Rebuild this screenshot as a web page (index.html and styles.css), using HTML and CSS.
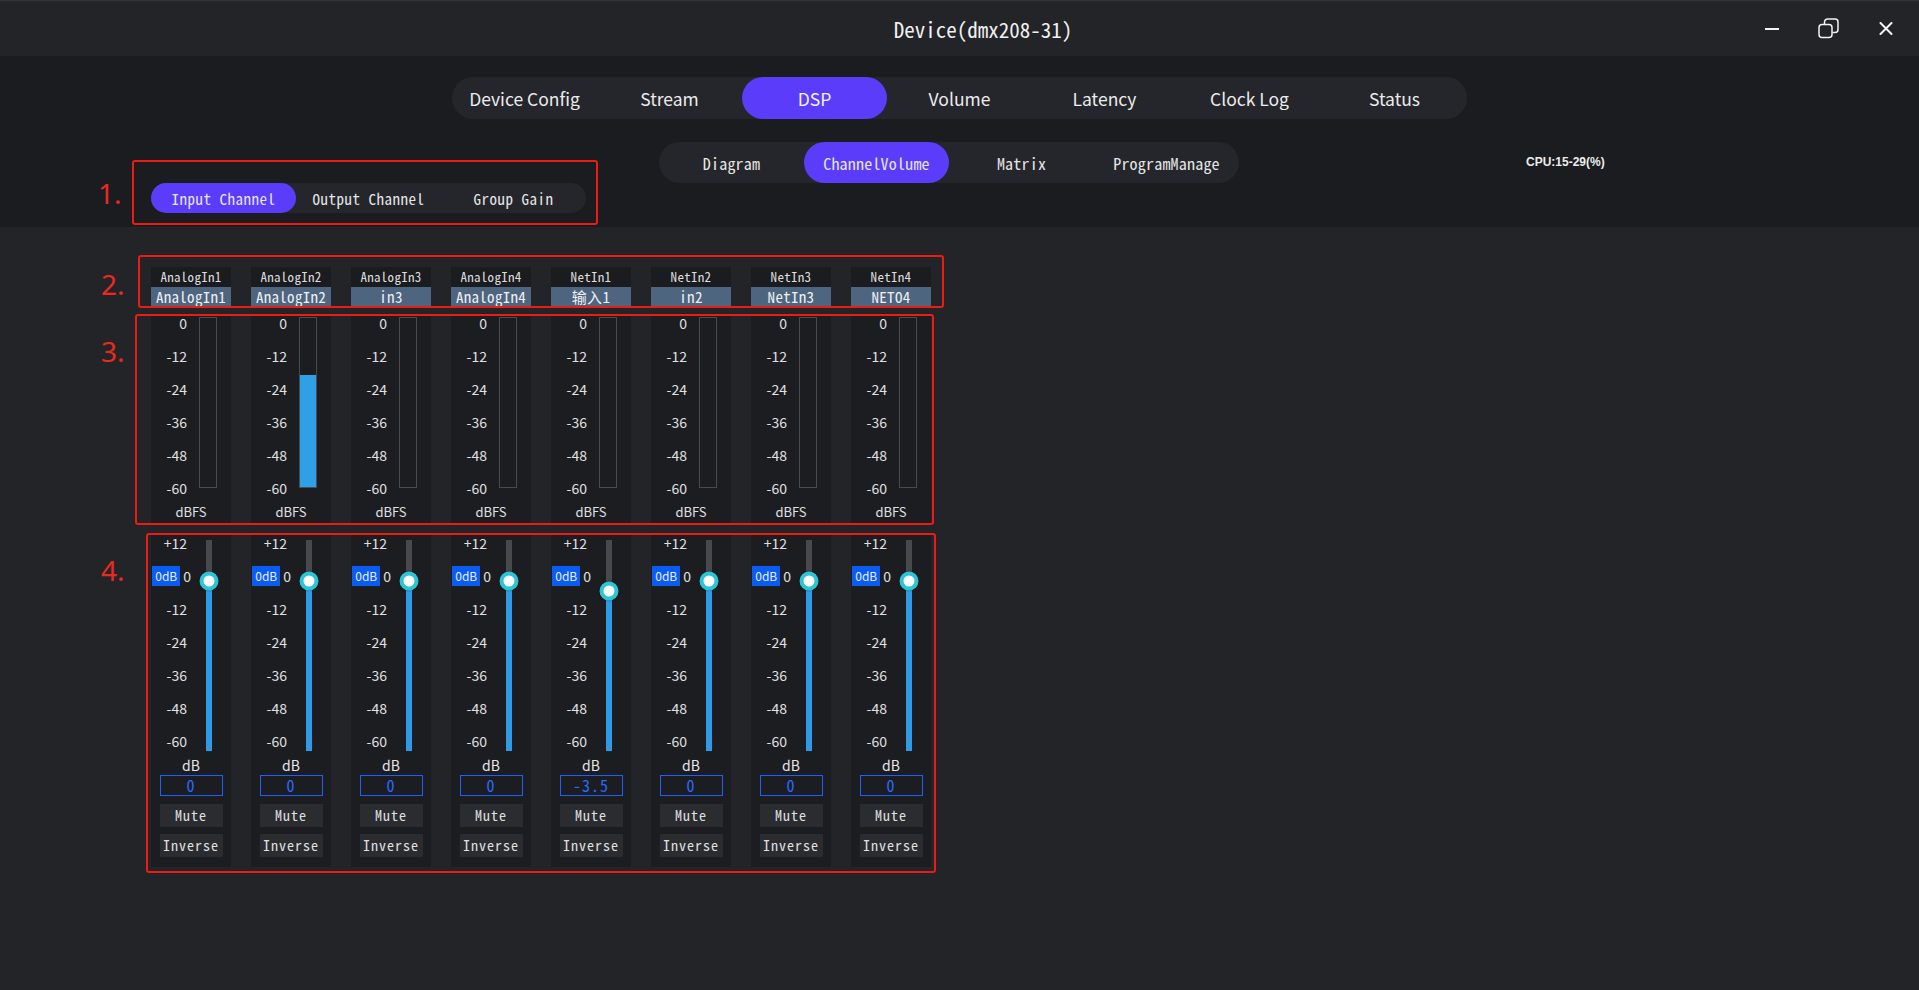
FILE: index.html
```html
<!DOCTYPE html>
<html lang="en">
<head>
<meta charset="utf-8">
<title>Device(dmx208-31)</title>
<link rel="stylesheet" href="styles.css">
</head>
<body>
<div class="titlebar">
  <div class="title">Device(dmx208-31)</div>
  <div class="winctl">
    <div class="winbtn"><svg width="14" height="2" viewBox="0 0 14 2"><rect width="14" height="2" fill="#f2f2f2"/></svg></div>
    <div class="winbtn"><svg width="21" height="21" viewBox="0 0 21 21" fill="none" stroke="#f2f2f2" stroke-width="1.5"><rect x="1" y="6.5" width="13" height="13" rx="3"/><path d="M6.5 6V4A3 3 0 0 1 9.5 1H17A3 3 0 0 1 20 4V11.5A3 3 0 0 1 17 14.5H14.5"/></svg></div>
    <div class="winbtn"><svg width="14" height="13" viewBox="0 0 14 13" stroke="#f2f2f2" stroke-width="2" stroke-linecap="round"><path d="M1.5 1L12.5 12M12.5 1L1.5 12"/></svg></div>
  </div>
</div>

<div class="header">
  <div class="maintabs">
    <div class="maintab">Device Config</div>
    <div class="maintab">Stream</div>
    <div class="maintab active">DSP</div>
    <div class="maintab">Volume</div>
    <div class="maintab">Latency</div>
    <div class="maintab">Clock Log</div>
    <div class="maintab">Status</div>
  </div>
  <div class="subrow">
    <div class="anno anno1">1.</div>
    <div class="box box1">
      <div class="pills">
        <div class="pill active">Input Channel</div>
        <div class="pill">Output Channel</div>
        <div class="pill">Group Gain</div>
      </div>
    </div>
    <div class="subtabs">
      <div class="subtab">Diagram</div>
      <div class="subtab active">ChannelVolume</div>
      <div class="subtab">Matrix</div>
      <div class="subtab">ProgramManage</div>
    </div>
    <div class="cpu">CPU:15-29(%)</div>
  </div>
</div>

<div class="content">
  <div class="row">
    <div class="anno anno2">2.</div>
    <div class="box box2">
      <div class="cols">
        <div class="hcol"><div class="hlabel">AnalogIn1</div><div class="hname">AnalogIn1</div></div>
        <div class="hcol"><div class="hlabel">AnalogIn2</div><div class="hname">AnalogIn2</div></div>
        <div class="hcol"><div class="hlabel">AnalogIn3</div><div class="hname">in3</div></div>
        <div class="hcol"><div class="hlabel">AnalogIn4</div><div class="hname">AnalogIn4</div></div>
        <div class="hcol"><div class="hlabel">NetIn1</div><div class="hname">输入1</div></div>
        <div class="hcol"><div class="hlabel">NetIn2</div><div class="hname">in2</div></div>
        <div class="hcol"><div class="hlabel">NetIn3</div><div class="hname">NetIn3</div></div>
        <div class="hcol"><div class="hlabel">NetIn4</div><div class="hname">NETO4</div></div>
      </div>
    </div>
  </div>

  <div class="row row3">
    <div class="anno anno3">3.</div>
    <div class="box box3">
      <div class="cols">
        <div class="mcol"><div class="mtop"><div class="mscale"><span>0</span><span>-12</span><span>-24</span><span>-36</span><span>-48</span><span>-60</span></div><div class="meter"><div class="mfill" style="height:0px"></div></div></div><div class="munit">dBFS</div></div>
        <div class="mcol"><div class="mtop"><div class="mscale"><span>0</span><span>-12</span><span>-24</span><span>-36</span><span>-48</span><span>-60</span></div><div class="meter"><div class="mfill" style="height:112px"></div></div></div><div class="munit">dBFS</div></div>
        <div class="mcol"><div class="mtop"><div class="mscale"><span>0</span><span>-12</span><span>-24</span><span>-36</span><span>-48</span><span>-60</span></div><div class="meter"><div class="mfill" style="height:0px"></div></div></div><div class="munit">dBFS</div></div>
        <div class="mcol"><div class="mtop"><div class="mscale"><span>0</span><span>-12</span><span>-24</span><span>-36</span><span>-48</span><span>-60</span></div><div class="meter"><div class="mfill" style="height:0px"></div></div></div><div class="munit">dBFS</div></div>
        <div class="mcol"><div class="mtop"><div class="mscale"><span>0</span><span>-12</span><span>-24</span><span>-36</span><span>-48</span><span>-60</span></div><div class="meter"><div class="mfill" style="height:0px"></div></div></div><div class="munit">dBFS</div></div>
        <div class="mcol"><div class="mtop"><div class="mscale"><span>0</span><span>-12</span><span>-24</span><span>-36</span><span>-48</span><span>-60</span></div><div class="meter"><div class="mfill" style="height:0px"></div></div></div><div class="munit">dBFS</div></div>
        <div class="mcol"><div class="mtop"><div class="mscale"><span>0</span><span>-12</span><span>-24</span><span>-36</span><span>-48</span><span>-60</span></div><div class="meter"><div class="mfill" style="height:0px"></div></div></div><div class="munit">dBFS</div></div>
        <div class="mcol"><div class="mtop"><div class="mscale"><span>0</span><span>-12</span><span>-24</span><span>-36</span><span>-48</span><span>-60</span></div><div class="meter"><div class="mfill" style="height:0px"></div></div></div><div class="munit">dBFS</div></div>
      </div>
    </div>
  </div>

  <div class="row row4">
    <div class="anno anno4">4.</div>
    <div class="box box4">
      <div class="cols">
        <div class="fcol"><div class="ftop"><div class="fscale"><span>+12</span><span class="zero"><b class="odb">0dB</b>0</span><span>-12</span><span>-24</span><span>-36</span><span>-48</span><span>-60</span></div><div class="track"><div class="track-off" style="height:41px"></div><div class="track-on"></div><div class="knob" style="top:41px"></div></div></div><div class="fdb">dB</div><div class="fval">0</div><div class="fbtn">Mute</div><div class="fbtn">Inverse</div></div>
        <div class="fcol"><div class="ftop"><div class="fscale"><span>+12</span><span class="zero"><b class="odb">0dB</b>0</span><span>-12</span><span>-24</span><span>-36</span><span>-48</span><span>-60</span></div><div class="track"><div class="track-off" style="height:41px"></div><div class="track-on"></div><div class="knob" style="top:41px"></div></div></div><div class="fdb">dB</div><div class="fval">0</div><div class="fbtn">Mute</div><div class="fbtn">Inverse</div></div>
        <div class="fcol"><div class="ftop"><div class="fscale"><span>+12</span><span class="zero"><b class="odb">0dB</b>0</span><span>-12</span><span>-24</span><span>-36</span><span>-48</span><span>-60</span></div><div class="track"><div class="track-off" style="height:41px"></div><div class="track-on"></div><div class="knob" style="top:41px"></div></div></div><div class="fdb">dB</div><div class="fval">0</div><div class="fbtn">Mute</div><div class="fbtn">Inverse</div></div>
        <div class="fcol"><div class="ftop"><div class="fscale"><span>+12</span><span class="zero"><b class="odb">0dB</b>0</span><span>-12</span><span>-24</span><span>-36</span><span>-48</span><span>-60</span></div><div class="track"><div class="track-off" style="height:41px"></div><div class="track-on"></div><div class="knob" style="top:41px"></div></div></div><div class="fdb">dB</div><div class="fval">0</div><div class="fbtn">Mute</div><div class="fbtn">Inverse</div></div>
        <div class="fcol"><div class="ftop"><div class="fscale"><span>+12</span><span class="zero"><b class="odb">0dB</b>0</span><span>-12</span><span>-24</span><span>-36</span><span>-48</span><span>-60</span></div><div class="track"><div class="track-off" style="height:51px"></div><div class="track-on"></div><div class="knob" style="top:51px"></div></div></div><div class="fdb">dB</div><div class="fval">-3.5</div><div class="fbtn">Mute</div><div class="fbtn">Inverse</div></div>
        <div class="fcol"><div class="ftop"><div class="fscale"><span>+12</span><span class="zero"><b class="odb">0dB</b>0</span><span>-12</span><span>-24</span><span>-36</span><span>-48</span><span>-60</span></div><div class="track"><div class="track-off" style="height:41px"></div><div class="track-on"></div><div class="knob" style="top:41px"></div></div></div><div class="fdb">dB</div><div class="fval">0</div><div class="fbtn">Mute</div><div class="fbtn">Inverse</div></div>
        <div class="fcol"><div class="ftop"><div class="fscale"><span>+12</span><span class="zero"><b class="odb">0dB</b>0</span><span>-12</span><span>-24</span><span>-36</span><span>-48</span><span>-60</span></div><div class="track"><div class="track-off" style="height:41px"></div><div class="track-on"></div><div class="knob" style="top:41px"></div></div></div><div class="fdb">dB</div><div class="fval">0</div><div class="fbtn">Mute</div><div class="fbtn">Inverse</div></div>
        <div class="fcol"><div class="ftop"><div class="fscale"><span>+12</span><span class="zero"><b class="odb">0dB</b>0</span><span>-12</span><span>-24</span><span>-36</span><span>-48</span><span>-60</span></div><div class="track"><div class="track-off" style="height:41px"></div><div class="track-on"></div><div class="knob" style="top:41px"></div></div></div><div class="fdb">dB</div><div class="fval">0</div><div class="fbtn">Mute</div><div class="fbtn">Inverse</div></div>
      </div>
    </div>
  </div>
</div>
</body>
</html>
```

FILE: styles.css
```css
html, body {
  margin: 0;
  padding: 0;
}
body {
  width: 1919px;
  height: 990px;
  overflow: hidden;
  background: #1b1c1f;
  color: #e6e6e6;
  font-family: "Noto Sans CJK SC", "Noto Sans", sans-serif;
}

/* title bar */
.titlebar {
  height: 56px;
  box-sizing: border-box;
  border-top: 1px solid #34353a;
  background: #232428;
  display: flex;
  align-items: center;
}
.title {
  flex: 1;
  text-align: center;
  padding-left: 223px;
  font-family: "Noto Sans Mono CJK SC", "Noto Sans CJK SC", "DejaVu Sans Mono", monospace;
  font-size: 21px;
  color: #f0f0f0;
}
.winctl {
  display: flex;
  padding-right: 5px;
}
.winbtn {
  width: 57px;
  height: 55px;
  display: flex;
  align-items: center;
  justify-content: center;
}

/* header */
.header {
  height: 171px;
  box-sizing: border-box;
  padding-top: 21px;
  background: #1b1c1f;
}
.maintabs {
  display: flex;
  width: 1015px;
  height: 42px;
  margin: 0 auto;
  background: #25262b;
  border-radius: 21px;
}
.maintab {
  width: 145px;
  display: flex;
  align-items: center;
  justify-content: center;
  border-radius: 21px;
  font-size: 17.5px;
  color: #ececec;
}
.active {
  background: #5b3cfb;
  color: #f4f2ff;
}
.subrow {
  display: flex;
  align-items: flex-start;
  padding-left: 98px;
  margin-top: 23px;
}
.anno {
  width: 34px;
  box-sizing: border-box;
  font-family: "Noto Sans", "Liberation Sans", sans-serif;
  font-size: 28px;
  line-height: 34px;
  color: #ea2a1f;
}
.anno1 { margin-top: 34px; }
.anno2 { margin-top: 12px; padding-left: 3px; }
.anno3 { margin-top: 20px; padding-left: 3px; }
.anno4 { margin-top: 20px; padding-left: 3px; }
.box {
  border: 2px solid #ec1c14;
  border-radius: 3px;
}
.box1 {
  margin-top: 18px;
  padding: 21px 10px 10px 17px;
}
.pills {
  display: flex;
  height: 30px;
  background: #25262b;
  border-radius: 15px;
}
.pill {
  width: 145px;
  display: flex;
  align-items: center;
  justify-content: center;
  border-radius: 15px;
  font-family: "Noto Sans Mono CJK SC", "Noto Sans CJK SC", "DejaVu Sans Mono", monospace;
  font-size: 15px;
  letter-spacing: 0.5px;
  color: #e6e6e6;
}
.subtabs {
  margin-left: 61px;
  display: flex;
  height: 41px;
  background: #25262b;
  border-radius: 21px;
}
.subtab {
  width: 145px;
  display: flex;
  align-items: center;
  justify-content: center;
  border-radius: 21px;
  font-family: "Noto Sans Mono CJK SC", "Noto Sans CJK SC", "DejaVu Sans Mono", monospace;
  font-size: 16px;
  letter-spacing: 0.2px;
  color: #e6e6e6;
}
.cpu {
  margin-left: 287px;
  margin-top: 13px;
  font-family: "Liberation Sans", Arial, sans-serif;
  font-weight: bold;
  font-size: 12px;
  color: #ececec;
}

/* content */
.content {
  height: 763px;
  box-sizing: border-box;
  padding-top: 28px;
  background: #232428;
}
.row {
  display: flex;
  align-items: flex-start;
  padding-left: 98px;
}
.row3 { margin-top: 6px; }
.row4 { margin-top: 8px; }
.cols {
  display: flex;
  gap: 20px;
}
.box2 {
  margin-left: 6px;
  padding: 10px 11px 0 11px;
}
.box3 {
  margin-left: 3px;
  padding: 0 1px 0 14px;
}
.box4 {
  margin-left: 14px;
  padding: 0 3px 4px 3px;
}

/* header columns */
.hcol {
  width: 80px;
  text-align: center;
  font-family: "Noto Sans Mono CJK SC", "Noto Sans CJK SC", "DejaVu Sans Mono", monospace;
}
.hlabel {
  height: 20px;
  line-height: 20px;
  background: #1b1c1f;
  font-size: 13px;
  letter-spacing: 0.3px;
  color: #dedede;
}
.hname {
  height: 19px;
  line-height: 19px;
  background: #4e6580;
  font-size: 15px;
  letter-spacing: 0.3px;
  color: #eef0f3;
  white-space: nowrap;
  overflow: hidden;
}

/* meters */
.mcol {
  width: 80px;
  height: 207px;
  background: #1c1d21;
}
.mtop {
  display: flex;
  height: 188px;
}
.mscale {
  width: 36px;
  display: flex;
  flex-direction: column;
  align-items: flex-end;
  gap: 19px;
  font-size: 14px;
  color: #e0e0e0;
}
.mscale span {
  height: 14px;
  line-height: 14px;
}
.meter {
  margin-left: 12px;
  margin-top: 1px;
  width: 18px;
  height: 171px;
  box-sizing: border-box;
  border: 1px solid #4a4b4f;
  display: flex;
  flex-direction: column;
  justify-content: flex-end;
}
.mfill {
  background: #2f9fe8;
}
.munit {
  height: 16px;
  line-height: 16px;
  text-align: center;
  font-size: 13px;
  color: #e0e0e0;
}

/* faders */
.fcol {
  width: 80px;
  height: 332px;
  background: #1c1d21;
  display: flex;
  flex-direction: column;
  align-items: center;
}
.ftop {
  display: flex;
  height: 216px;
  width: 80px;
}
.fscale {
  width: 42px;
  box-sizing: border-box;
  padding-right: 6px;
  display: flex;
  flex-direction: column;
  align-items: flex-end;
  gap: 17px;
  font-size: 14px;
  color: #e0e0e0;
}
.fscale span {
  height: 16px;
  line-height: 16px;
  display: flex;
  align-items: center;
  white-space: nowrap;
}
.fscale .zero {
  margin-right: -4px;
}
.odb {
  display: inline-block;
  width: 28px;
  height: 20px;
  line-height: 20px;
  margin-right: 3px;
  text-align: center;
  background: #0b5cf2;
  color: #e8eeff;
  font-weight: normal;
  font-size: 12px;
}
.track {
  position: relative;
  margin-left: 13px;
  margin-top: 5px;
  width: 6px;
  height: 211px;
  display: flex;
  flex-direction: column;
}
.track-off {
  background: #48494d;
}
.track-on {
  flex: 1;
  background: #2f9be6;
}
.knob {
  position: absolute;
  left: 50%;
  width: 19px;
  height: 19px;
  box-sizing: border-box;
  border-radius: 50%;
  background: #ffffff;
  border: 4px solid #2cc5d5;
  transform: translate(-50%, -50%);
  box-shadow: 0 0 2px rgba(0, 0, 0, 0.5);
}
.fdb {
  margin-top: 5px;
  height: 18px;
  line-height: 18px;
  font-size: 14px;
  color: #e6e6e6;
}
.fval {
  margin-top: 1px;
  width: 63px;
  height: 21px;
  box-sizing: border-box;
  border: 1px solid #1f5fff;
  line-height: 19px;
  text-align: center;
  font-family: "Noto Sans Mono CJK SC", "Noto Sans CJK SC", "DejaVu Sans Mono", monospace;
  font-size: 16px;
  letter-spacing: 1px;
  color: #2a6cff;
}
.fbtn {
  margin-top: 8px;
  width: 63px;
  height: 23px;
  line-height: 23px;
  text-align: center;
  background: #2b2c30;
  font-family: "Noto Sans Mono CJK SC", "Noto Sans CJK SC", "DejaVu Sans Mono", monospace;
  font-size: 14px;
  letter-spacing: 1px;
  color: #e0e0e0;
}
.fbtn + .fbtn {
  margin-top: 7px;
}
```
